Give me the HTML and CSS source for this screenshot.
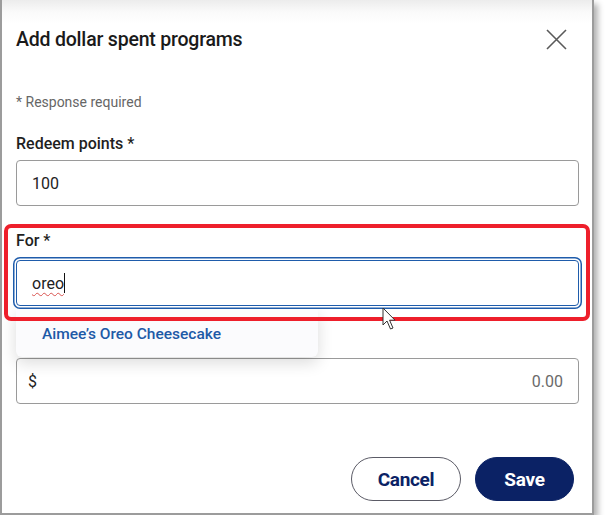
FILE: index.html
```html
<!DOCTYPE html>
<html>
<head>
<meta charset="utf-8">
<link rel="stylesheet" href="styles.css">
</head>
<body>
<div class="frame">
  <div class="dialog">
    <div class="header">
      <h1 class="title">Add dollar spent programs</h1>
      <button class="close" aria-label="Close">
        <svg width="21" height="21" viewBox="0 0 21 21"><path d="M1 1 L20 20 M20 1 L1 20" stroke="#5a5a5a" stroke-width="1.6" fill="none"/></svg>
      </button>
    </div>
    <p class="required">* Response required</p>
    <label class="label">Redeem points *</label>
    <div class="input"><span class="value">100</span></div>

    <div class="highlight">
      <label class="label label-for">For *</label>
      <div class="input focused"><span class="value typed">oreo</span><span class="caret"></span></div>
      <div class="dropdown"><span class="option">Aimee’s Oreo Cheesecake</span></div>
    </div>

    <div class="input amount"><span class="value">$</span><span class="placeholder">0.00</span></div>

    <div class="actions">
      <button class="btn btn-outline">Cancel</button>
      <button class="btn btn-primary">Save</button>
    </div>
  </div>
  <svg class="cursor" width="16" height="24" viewBox="0 0 16 24"><path d="M1 1 L1 18 L5 14 L8.5 22 L11 21 L7.6 13.2 L13 13.2 Z" fill="#fff" stroke="#333" stroke-width="1" stroke-linejoin="round"/></svg>
</div>
</body>
</html>
```

FILE: styles.css
```css
* { box-sizing: border-box; }
html, body { margin: 0; padding: 0; background: #fff; }
body { font-family: Roboto, "Liberation Sans", sans-serif; color: #1f1f1f; }

.frame {
  position: relative;
  width: 594px;
  height: 515px;
  border-left: 2px solid #9c9c9c;
  border-right: 2px solid #9c9c9c;
  border-bottom: 2px solid #9c9c9c;
  background: linear-gradient(#ececec 0, #fafafa 12px, #fff 24px);
  box-shadow: 4px 4px 6px rgba(0,0,0,0.30);
}

.dialog {
  display: flex;
  flex-direction: column;
  padding: 0 13px 0 14px;
}

.header {
  display: flex;
  align-items: center;
  justify-content: space-between;
  padding-top: 28px;
  height: 52px;
}
.title {
  margin: 0;
  font-size: 19.5px;
  line-height: 24px;
  font-weight: 500;
  color: #1a1a1a;
  letter-spacing: -0.2px;
}
.close {
  border: 0;
  background: none;
  padding: 0;
  margin-right: 12px;
  margin-top: -2px;
  width: 21px;
  height: 21px;
  display: flex;
}

.required {
  margin: 40px 0 0;
  font-size: 14px;
  line-height: 20px;
  color: #666;
}

.label {
  display: block;
  margin-top: 22px;
  font-size: 16px;
  line-height: 20px;
  font-weight: 500;
  color: #1f1f1f;
}

.input {
  display: flex;
  align-items: center;
  justify-content: space-between;
  margin-top: 6px;
  height: 46px;
  border: 1px solid #9a9a9a;
  border-radius: 4px;
  padding: 0 15px;
  background: #fff;
  font-size: 16px;
}
.value { color: #222; }

.highlight {
  position: relative;
  z-index: 3;
  margin: 18px -11px 0 -12px;
  border: 4px solid transparent;
  padding: 3px 7px 11px 8px;
}
.highlight::after {
  content: "";
  position: absolute;
  inset: -4px;
  border: 4px solid #ee1f2b;
  border-radius: 7px;
  z-index: 4;
  pointer-events: none;
}
.label-for { margin-top: 0; }
.focused {
  position: relative;
  z-index: 2;
  margin-top: 9px;
  border: 1.5px solid #1f5cab;
  box-shadow: 0 0 0 1.5px #fff, 0 0 0 3px #1f5cab;
  justify-content: flex-start;
}
.typed {
  text-decoration: underline wavy #d9534f;
  text-decoration-thickness: 1px;
  text-underline-offset: 3px;
}
.caret {
  width: 1px;
  height: 20px;
  background: #111;
}

.dropdown {
  position: absolute;
  z-index: 1;
  left: 8px;
  top: 80px;
  width: 302px;
  height: 49px;
  background: #fbfbfd;
  border-radius: 0 0 6px 6px;
  box-shadow: 0 6px 16px rgba(0,0,0,0.14);
  padding: 16px 0 0 26px;
}
.option {
  font-size: 15.5px;
  line-height: 20px;
  font-weight: 500;
  color: #1d5aa7;
}

.amount {
  margin-top: 37px;
  padding: 0 15px 0 11px;
}
.placeholder { color: #6a6a6a; }

.actions {
  display: flex;
  justify-content: flex-end;
  gap: 14px;
  margin-top: 53px;
  margin-right: 5px;
}
.btn {
  height: 44px;
  border-radius: 22px;
  font-family: Roboto, "Liberation Sans", sans-serif;
  font-size: 19px;
  font-weight: 700;
  letter-spacing: -0.3px;
}
.btn-outline {
  width: 110px;
  background: #fff;
  border: 1px solid #5b5b66;
  color: #0b2265;
}
.btn-primary {
  width: 99px;
  background: #0b2265;
  border: 1px solid #0b2265;
  color: #fff;
}

.cursor {
  position: absolute;
  z-index: 5;
  left: 380px;
  top: 307px;
}
```
